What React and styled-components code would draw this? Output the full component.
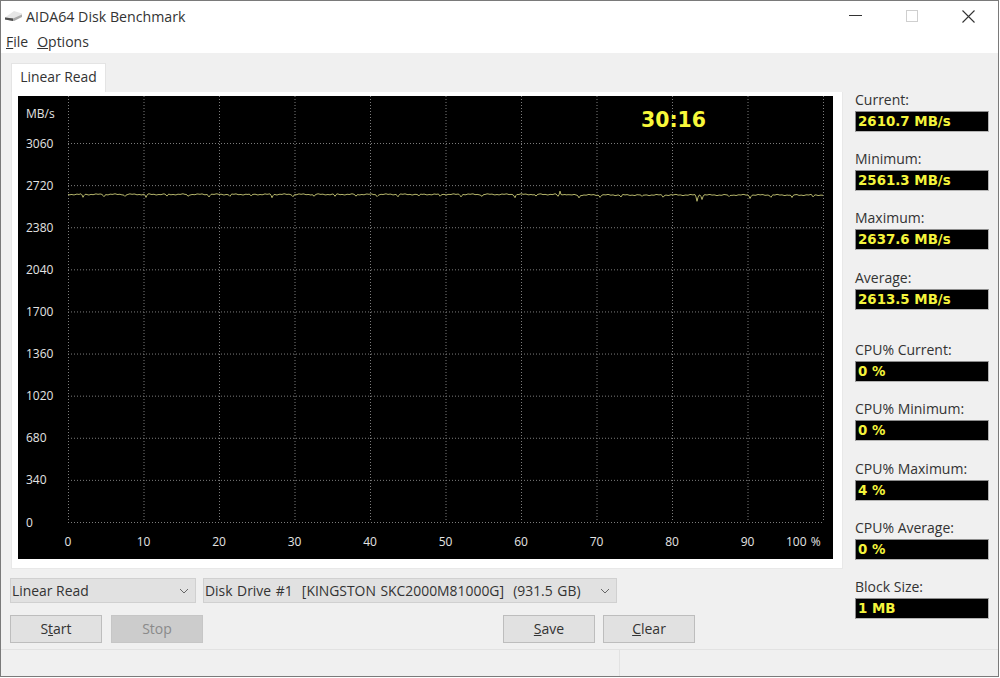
import React from 'react'
import styled, { createGlobalStyle } from 'styled-components'

const GlobalStyle = createGlobalStyle`
  html, body {
    margin: 0;
    padding: 0;
    background: #fff;
  }
  * {
    box-sizing: border-box;
  }
`

const Window = styled.div`
  width: 999px;
  height: 677px;
  display: flex;
  flex-direction: column;
  border: 1px solid #7a7a7a;
  background: #f0f0f0;
  font-family: "Open Sans", "Noto Sans", sans-serif;
  color: #2b2b2b;
  overflow: hidden;
`

const TitleBar = styled.div`
  height: 30px;
  flex: none;
  display: flex;
  align-items: center;
  background: #fff;
  padding-left: 3px;
`

const Title = styled.span`
  font-size: 14.2px;
  margin-left: 3px;
  margin-top: 1px;
  color: #333;
`

const WindowButtons = styled.div`
  margin-left: auto;
  margin-right: 16px;
  display: flex;
  align-items: center;
  gap: 28px;
`

const WindowButton = styled.div`
  width: 28px;
  height: 30px;
  display: flex;
  align-items: center;
  justify-content: center;
`

const MenuBar = styled.div`
  height: 22px;
  flex: none;
  display: flex;
  align-items: center;
  gap: 9px;
  background: #fff;
  padding: 0 0 2px 5px;
  font-size: 14px;
  color: #333;
`

const Main = styled.div`
  flex: 1;
  display: flex;
  min-height: 0;
`

const LeftColumn = styled.div`
  width: 854px;
  flex: none;
  padding: 10px 0 0 9px;
  display: flex;
  flex-direction: column;
`

const Tab = styled.div`
  width: 95px;
  height: 29px;
  margin-left: 1px;
  padding-bottom: 4px;
  background: #fff;
  border: 1px solid #e4e4e4;
  border-bottom: none;
  display: flex;
  align-items: center;
  justify-content: center;
  font-size: 13.9px;
  color: #333;
`

const TabPanel = styled.div`
  width: 832px;
  height: 477px;
  margin-left: 1px;
  padding: 4px 10px 10px 6px;
  background: #fff;
  border: 1px solid #e8e8e8;
  border-top: none;
`

const ChartSvg = styled.svg`
  display: block;
  width: 815px;
  height: 463px;
  background: #000;
`

const Controls = styled.div`
  display: flex;
  flex-direction: column;
  gap: 12px;
  margin-top: 9px;
`

const ControlRow = styled.div`
  display: flex;
  align-items: center;
`

const Combo = styled.div`
  width: ${(p) => p.$width}px;
  margin-right: ${(p) => p.$gap || 0}px;
  height: 25px;
  padding: 0 6px 0 1px;
  display: flex;
  align-items: center;
  justify-content: space-between;
  background: #e1e1e1;
  border: 1px solid #d0d0d0;
  font-size: 13.9px;
  word-spacing: ${(p) => p.$wordSpacing || 0}px;
  color: #333;
  white-space: pre;
`

const Button = styled.div`
  width: 92px;
  height: 28px;
  margin-right: ${(p) => p.$gap || 0}px;
  padding-bottom: 2px;
  display: flex;
  align-items: center;
  justify-content: center;
  font-size: 14px;
  background: ${(p) => (p.$disabled ? '#cccccc' : '#e1e1e1')};
  border: 1px solid ${(p) => (p.$disabled ? '#c6c6c6' : '#bdbdbd')};
  color: ${(p) => (p.$disabled ? '#8a8a8a' : '#333')};
`

const Sidebar = styled.div`
  width: 143px;
  flex: none;
  padding-top: 38px;
  display: flex;
  flex-direction: column;
`

const StatGroup = styled.div`
  display: flex;
  flex-direction: column;
  margin-bottom: ${(p) => p.$after}px;
`

const StatLabel = styled.div`
  height: 20px;
  line-height: 17px;
  font-size: 14px;
  color: #333;
`

const StatValue = styled.div`
  width: 134px;
  height: 21px;
  padding-left: 2px;
  display: flex;
  align-items: center;
  background: #000;
  border: 1px solid #8c8c8c;
  border-right-color: #b4b4b4;
  border-bottom-color: #b4b4b4;
  color: #f4f43c;
  font-family: "DejaVu Sans", Verdana, sans-serif;
  font-weight: 700;
  font-size: 13.4px;
  white-space: nowrap;
`

const StatusBar = styled.div`
  height: 27px;
  flex: none;
  display: flex;
  border-top: 1px solid #e2e2e2;
`

const StatusCell = styled.div`
  width: 619px;
  border-right: 1px solid #e2e2e2;
`

const Y_LABELS = [3060, 2720, 2380, 2040, 1700, 1360, 1020, 680, 340, 0]
const X_LABELS = [0, 10, 20, 30, 40, 50, 60, 70, 80, 90]

const LEFT = 50
const RIGHT = 805
const TOP = 47
const BOTTOM = 426

const xAt = (i) => LEFT + ((RIGHT - LEFT) * i) / 10
const yAt = (i) => TOP + ((BOTTOM - TOP) * i) / 9

// small dips seen in the read curve, [x, depth]
const DIPS = [
  [15, 3], [36, 2], [57, 2], [78, 3], [99, 2], [120, 2], [141, 2], [162, 2], [183, 2],
  [204, 3], [225, 2], [246, 2], [267, 2], [288, 2], [309, 2], [330, 2], [351, 2],
  [372, 2], [393, 2], [414, 2], [447, 3], [468, 2], [490, 2], [511, 3], [532, 2],
  [553, 2], [574, 2], [595, 2], [629, 6], [634, 4], [661, 2], [682, 3], [703, 2],
  [724, 3], [745, 2],
]

const buildTrace = () => {
  const dips = new Map(DIPS)
  const pts = []
  for (let x = 0; x <= RIGHT - LEFT; x += 1) {
    const wobble = Math.sin(x * 0.37) * 0.35 + Math.sin(x * 1.3) * 0.25
    let y = 98.4 + wobble + (x > 500 ? 0.6 : 0)
    if (dips.has(x)) y += dips.get(x)
    if (dips.has(x - 1)) y += dips.get(x - 1) / 3
    if (dips.has(x + 1)) y += dips.get(x + 1) / 3
    if (x === 492) y -= 3
    pts.push(`${LEFT + x},${y.toFixed(1)}`)
  }
  return pts.join(' ')
}

const Chart = () => (
  <ChartSvg viewBox="0 0 815 463">
    <g stroke="#7c7c7c" strokeWidth="1" strokeDasharray="1 2">
      {Array.from({ length: 11 }, (_, i) => (
        <line key={i} x1={xAt(i) + 0.5} x2={xAt(i) + 0.5} y1="0" y2={BOTTOM} />
      ))}
      {Y_LABELS.map((_, i) => (
        <line key={i} x1={LEFT} x2={RIGHT} y1={yAt(i) + 0.5} y2={yAt(i) + 0.5} />
      ))}
    </g>
    <polyline points={buildTrace()} fill="none" stroke="#b4b46a" strokeWidth="1" />
    <g fill="#e4e4e4" fontFamily='"Open Sans", sans-serif' fontSize="12">
      <text x="8" y="22">MB/s</text>
      {Y_LABELS.map((v, i) => (
        <text key={v} x="8" y={yAt(i) + 4.5}>{v}</text>
      ))}
      {X_LABELS.map((v, i) => (
        <text key={v} x={xAt(i)} y="450" textAnchor="middle">{v}</text>
      ))}
      <text x="768" y="450" wordSpacing="1">100 %</text>
    </g>
    <text x="623" y="31" fill="#f8f83a" fontFamily='"DejaVu Sans", Verdana, sans-serif' fontWeight="700" fontSize="20.4">
      30:16
    </text>
  </ChartSvg>
)

const DiskIcon = () => (
  <svg width="19" height="14" viewBox="0 0 19 14">
    <path d="M1 8.5 L10 2 L18 4.5 L18 7.5 L9 11.5 Z" fill="#e6e6e6" />
    <path d="M1 8.5 L9 9.5 L18 5.5 V8 L10 12 L1 10.5 Z" fill="#a9a9a9" />
    <path d="M1 8.5 L9 9.5 V12 L1 10.5 Z" fill="#4e4e4e" />
  </svg>
)

const Chevron = () => (
  <svg width="10" height="6" viewBox="0 0 10 6">
    <path d="M1 1 L5 5 L9 1" fill="none" stroke="#666" strokeWidth="1" />
  </svg>
)

const STATS = [
  { label: 'Current:', value: '2610.7 MB/s', after: 18 },
  { label: 'Minimum:', value: '2561.3 MB/s', after: 18 },
  { label: 'Maximum:', value: '2637.6 MB/s', after: 19 },
  { label: 'Average:', value: '2613.5 MB/s', after: 31 },
  { label: 'CPU% Current:', value: '0 %', after: 18 },
  { label: 'CPU% Minimum:', value: '0 %', after: 19 },
  { label: 'CPU% Maximum:', value: '4 %', after: 18 },
  { label: 'CPU% Average:', value: '0 %', after: 18 },
  { label: 'Block Size:', value: '1 MB', after: 0 },
]

const App = () => (
  <>
    <GlobalStyle />
    <Window>
      <TitleBar>
        <DiskIcon />
        <Title>AIDA64 Disk Benchmark</Title>
        <WindowButtons>
          <WindowButton>
            <svg width="14" height="2" viewBox="0 0 14 2"><rect width="13" height="1" fill="#333" /></svg>
          </WindowButton>
          <WindowButton>
            <svg width="13" height="13" viewBox="0 0 13 13"><rect x="0.5" y="0.5" width="11" height="11" fill="none" stroke="#cfcfcf" /></svg>
          </WindowButton>
          <WindowButton>
            <svg width="13" height="13" viewBox="0 0 13 13"><path d="M0.5 0.5 L12.5 12.5 M12.5 0.5 L0.5 12.5" stroke="#333" strokeWidth="1.1" /></svg>
          </WindowButton>
        </WindowButtons>
      </TitleBar>
      <MenuBar>
        <span><u>F</u>ile</span>
        <span><u>O</u>ptions</span>
      </MenuBar>
      <Main>
        <LeftColumn>
          <Tab>Linear Read</Tab>
          <TabPanel>
            <Chart />
          </TabPanel>
          <Controls>
            <ControlRow>
              <Combo $width={186} $gap={7}>Linear Read<Chevron /></Combo>
              <Combo $width={414} $wordSpacing={1}>{'Disk Drive #1  [KINGSTON SKC2000M81000G]  (931.5 GB)'}<Chevron /></Combo>
            </ControlRow>
            <ControlRow>
              <Button $gap={9}>S<u>t</u>art</Button>
              <Button $disabled $gap={300}>Stop</Button>
              <Button $gap={8}><u>S</u>ave</Button>
              <Button><u>C</u>lear</Button>
            </ControlRow>
          </Controls>
        </LeftColumn>
        <Sidebar>
          {STATS.map((s) => (
            <StatGroup key={s.label} $after={s.after}>
              <StatLabel>{s.label}</StatLabel>
              <StatValue>{s.value}</StatValue>
            </StatGroup>
          ))}
        </Sidebar>
      </Main>
      <StatusBar>
        <StatusCell />
      </StatusBar>
    </Window>
  </>
)

export default App
